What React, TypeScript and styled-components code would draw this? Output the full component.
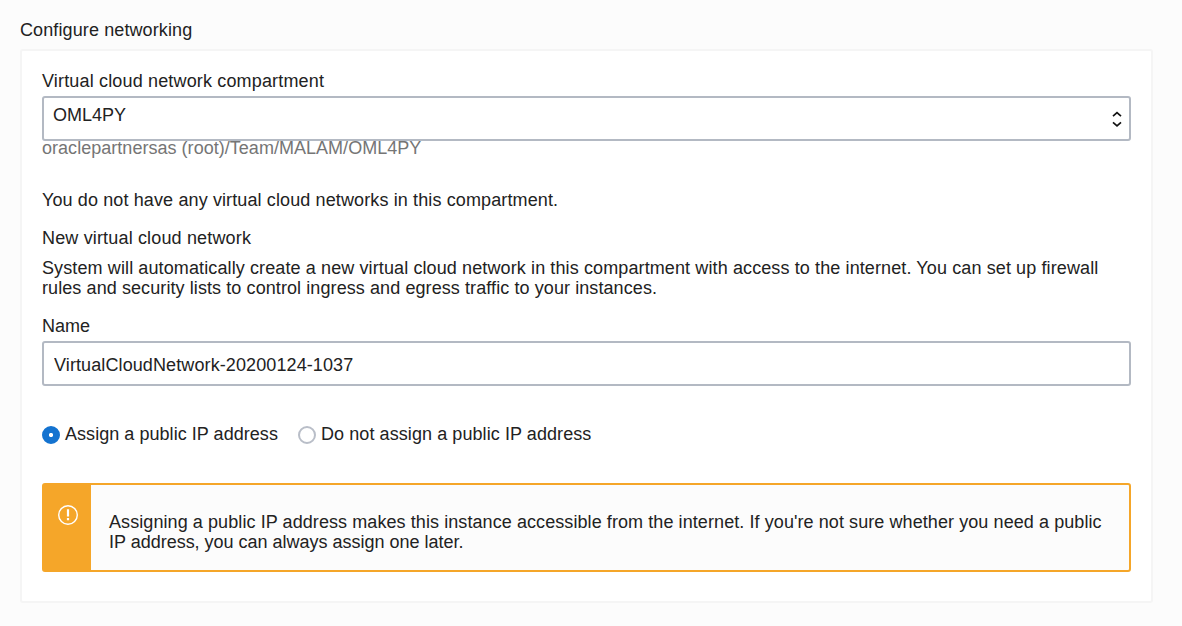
import React, { useState } from 'react';
import styled, { createGlobalStyle } from 'styled-components';

const GlobalStyle = createGlobalStyle`
  * { box-sizing: border-box; }
  body {
    margin: 0;
    background: #fcfcfc;
    color: #222;
    font: 18px/20px "Liberation Sans", Arial, sans-serif;
  }
`;

const Page = styled.main`
  padding: 20px 29px 23px 20px;
  min-height: 626px;
`;

const Heading = styled.h1`
  margin: 0 0 9px;
  font: inherit;
`;

const Panel = styled.section`
  display: flex;
  flex-direction: column;
  height: 554px;
  padding: 20px;
  background: #fff;
  border: 2px solid #f5f5f5;
  border-radius: 3px;
`;

const Label = styled.label`
  display: block;
  margin-bottom: 5px;
`;

const SelectBox = styled.div`
  position: relative;
  z-index: 1;
  display: flex;
  justify-content: space-between;
  height: 45px;
  padding: 7px 7px 0 9px;
  background: #fff;
  border: 2px solid #b3b9c3;
  border-radius: 3px;
`;

const Chevrons = styled.svg`
  width: 10px;
  height: 16px;
  margin-top: 6px;
`;

const Path = styled.div`
  margin-top: -3px;
  color: #757575;
`;

const Paragraph = styled.p<{ $top: number }>`
  margin: ${({ $top }) => $top}px 0 0;
`;

const Field = styled.div`
  margin-top: 18px;
`;

const TextInput = styled.input`
  display: block;
  width: 100%;
  height: 45px;
  padding: 3px 10px 0;
  color: inherit;
  font: inherit;
  letter-spacing: 0.105px;
  background: #fff;
  border: 2px solid #b3b9c3;
  border-radius: 3px;
  outline: none;
`;

const RadioGroup = styled.div`
  display: flex;
  gap: 20px;
  margin-top: 38px;
`;

const RadioLabel = styled.label`
  display: flex;
  gap: 5px;
`;

const Radio = styled.input`
  appearance: none;
  width: 18px;
  height: 18px;
  margin: 2px 0 0;
  border: 2px solid #b9bec8;
  border-radius: 50%;
  background: #fff;
  &:checked {
    border-color: #1473d0;
    background: radial-gradient(circle, #fff 1.7px, #1473d0 2.5px);
  }
`;

const Alert = styled.div`
  display: flex;
  height: 89px;
  margin-top: 39px;
  background: #fcfcfc;
  border: 2px solid #f5a629;
  border-radius: 3px;
`;

const AlertSide = styled.div`
  flex: 0 0 47px;
  padding: 19px 0 0 13px;
  background: #f5a629;
`;

const AlertText = styled.div`
  padding: 27px 0 0 18px;
`;

const Run = styled.span<{ $track?: number }>`
  letter-spacing: ${({ $track = 0 }) => $track}px;
  white-space: nowrap;
`;

export default function App() {
  const [name, setName] = useState('VirtualCloudNetwork-20200124-1037');
  const [isPublic, setPublic] = useState(true);
  return (
    <>
      <GlobalStyle />
      <Page>
        <Heading><Run $track={0.11}>Configure networking</Run></Heading>
        <Panel>
          <Label><Run $track={0.16}>Virtual cloud network compartment</Run></Label>
          <SelectBox>
            <Run>OML4PY</Run>
            <Chevrons viewBox="0 0 10 16" fill="none" stroke="#111" strokeWidth="1.7">
              <path d="M1 5.2 5 1.7 9 5.2M1 11.3 5 14.8 9 11.3" />
            </Chevrons>
          </SelectBox>
          <Path><Run $track={0.03}>oraclepartnersas (root)/Team/MALAM/OML4PY</Run></Path>
          <Paragraph $top={32}><Run $track={0.12}>You do not have any virtual cloud networks in this compartment.</Run></Paragraph>
          <Paragraph $top={18}><Run $track={0.16}>New virtual cloud network</Run></Paragraph>
          <Paragraph $top={10}>
            <Run $track={0.112}>System will automatically create a new virtual cloud network in this compartment with access to the internet. You can set up firewall</Run>
            <br />
            <Run $track={0.088}>rules and security lists to control ingress and egress traffic to your instances.</Run>
          </Paragraph>
          <Field>
            <Label htmlFor="vcn-name"><Run>Name</Run></Label>
            <TextInput id="vcn-name" value={name} onChange={(e) => setName(e.target.value)} />
          </Field>
          <RadioGroup>
            <RadioLabel>
              <Radio type="radio" name="ip" checked={isPublic} onChange={() => setPublic(true)} />
              <Run $track={0.045}>Assign a public IP address</Run>
            </RadioLabel>
            <RadioLabel>
              <Radio type="radio" name="ip" checked={!isPublic} onChange={() => setPublic(false)} />
              <Run $track={0.08}>Do not assign a public IP address</Run>
            </RadioLabel>
          </RadioGroup>
          <Alert>
            <AlertSide>
              <svg width="22" height="22" viewBox="0 0 22 22" fill="none">
                <circle cx="11" cy="11" r="9.3" stroke="#fff" strokeWidth="1.4" />
                <path d="M11 5.2V12.4M11 14V16.2" stroke="#fff" strokeWidth="2.2" />
              </svg>
            </AlertSide>
            <AlertText>
              <Run $track={0.081}>Assigning a public IP address makes this instance accessible from the internet. If you're not sure whether you need a public</Run>
              <br />
              <Run $track={-0.01}>IP address, you can always assign one later.</Run>
            </AlertText>
          </Alert>
        </Panel>
      </Page>
    </>
  );
}
